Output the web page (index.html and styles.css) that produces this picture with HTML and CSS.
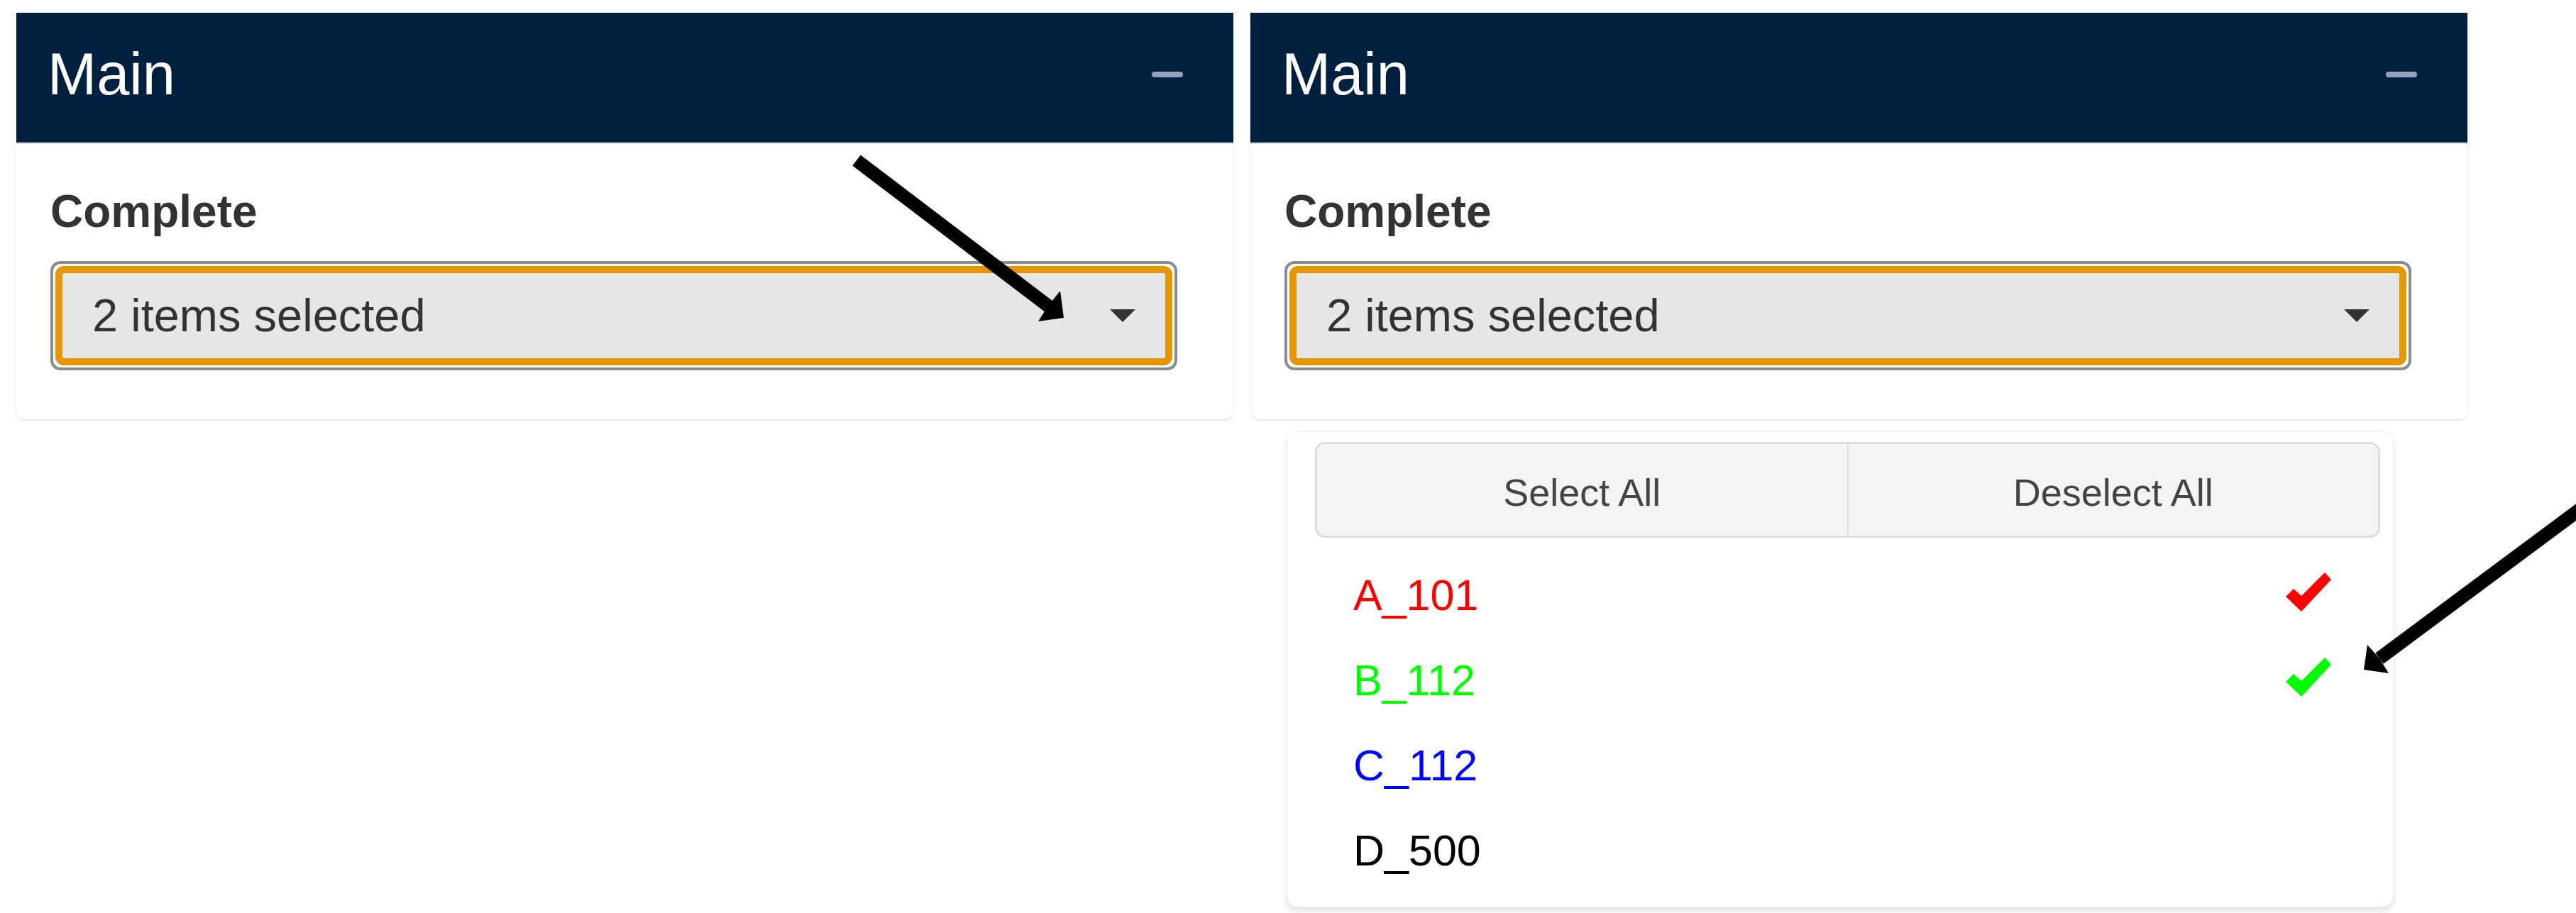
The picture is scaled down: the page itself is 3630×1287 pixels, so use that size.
FILE: index.html
```html
<!DOCTYPE html>
<html lang="en">
<head>
<meta charset="utf-8">
<title>Main</title>
<link rel="stylesheet" href="styles.css">
</head>
<body>
<div class="page">
  <section class="card">
    <header class="card-header">
      <h3 class="card-title">Main</h3>
      <span class="collapse-btn"></span>
    </header>
    <div class="card-body">
      <label class="field-label">Complete</label>
      <div class="picker">
        <div class="picker-btn">
          <div class="picker-inner">
            <span class="picker-text">2 items selected</span>
            <span class="caret"></span>
          </div>
        </div>
      </div>
    </div>
  </section>

  <section class="card">
    <header class="card-header">
      <h3 class="card-title">Main</h3>
      <span class="collapse-btn"></span>
    </header>
    <div class="card-body">
      <label class="field-label">Complete</label>
      <div class="picker">
        <div class="picker-btn">
          <div class="picker-inner">
            <span class="picker-text">2 items selected</span>
            <span class="caret"></span>
          </div>
        </div>
        <div class="menu">
          <div class="actions">
            <button class="action-btn">Select All</button>
            <button class="action-btn">Deselect All</button>
          </div>
          <ul class="options">
            <li class="option opt-red"><span>A_101</span>
              <svg class="check" viewBox="0 0 64 55"><polygon points="0,34 11,23 22,33 55,0 64,10 22,55" fill="#ff0000"/></svg>
            </li>
            <li class="option opt-green"><span>B_112</span>
              <svg class="check" viewBox="0 0 64 55"><polygon points="0,34 11,23 22,33 55,0 64,10 22,55" fill="#00ff00"/></svg>
            </li>
            <li class="option opt-blue"><span>C_112</span></li>
            <li class="option opt-black"><span>D_500</span></li>
          </ul>
        </div>
      </div>
    </div>
  </section>
</div>

<svg class="annotations" width="3630" height="1287" viewBox="0 0 3630 1287">
  <line x1="1207" y1="226" x2="1478" y2="432" stroke="#000" stroke-width="19"/>
  <polygon points="1499,448 1494,410 1477,431 1463,453" fill="#000"/>
  <line x1="3645" y1="711" x2="3353" y2="928" stroke="#000" stroke-width="19"/>
  <polygon points="3331,944 3336,909 3353,928 3366,949" fill="#000"/>
</svg>
</body>
</html>
```

FILE: styles.css
```css
* { box-sizing: border-box; }

html, body {
  margin: 0;
  padding: 0;
  width: 3630px;
  height: 1287px;
  overflow: hidden;
  background: #ffffff;
  font-family: "Liberation Sans", Arial, Helvetica, sans-serif;
  color: #333333;
}

body { position: relative; }

.page {
  display: flex;
  align-items: flex-start;
  gap: 24px;
  padding: 18px 0 0 23px;
}

.card {
  width: 1715px;
  background: #ffffff;
  border-radius: 0 0 12px 12px;
  box-shadow: 0 2px 2px rgba(0, 0, 0, 0.09), 0 0 0 1px rgba(0, 0, 0, 0.025);
}

.card-header {
  height: 184px;
  background: #00203f;
  border-bottom: 2px solid #6d7b90;
  display: flex;
  justify-content: space-between;
  align-items: flex-start;
  padding: 45px 71px 0 44px;
}

.card-title {
  margin: 0;
  font-size: 83px;
  line-height: 83px;
  font-weight: normal;
  color: #ffffff;
}

.collapse-btn {
  display: block;
  width: 44px;
  height: 8px;
  margin-top: 38px;
  border-radius: 4px;
  background: #98a1b9;
}

.card-body {
  padding: 64px 0 69px 48px;
}

.field-label {
  display: block;
  font-size: 64px;
  line-height: 64px;
  font-weight: bold;
  color: #333333;
  margin: 0 0 38px 0;
}

.picker {
  position: relative;
  width: 1588px;
}

.picker-btn {
  height: 154px;
  border: 4px solid #8c8c8c;
  border-radius: 14px;
  padding: 3px;
  background: #ffffff;
}

.picker-inner {
  height: 140px;
  border: 10px solid #e69700;
  border-radius: 12px;
  background: #e6e6e6;
  display: flex;
  align-items: center;
  justify-content: space-between;
  padding: 0 42px;
}

.picker-text {
  font-size: 65px;
  line-height: 120px;
  color: #333333;
}

.caret {
  width: 0;
  height: 0;
  border-left: 18px solid transparent;
  border-right: 18px solid transparent;
  border-top: 18px solid #333333;
}

.menu {
  position: absolute;
  top: 240px;
  left: 3px;
  width: 1560px;
  background: #ffffff;
  border: 1px solid rgba(0, 0, 0, 0.06);
  border-radius: 16px;
  box-shadow: 0 5px 8px rgba(0, 0, 0, 0.12);
  padding: 14px 18px 19px 39px;
}

.actions {
  display: flex;
  width: 1501px;
  height: 135px;
  border: 3px solid #dcdcdc;
  border-radius: 14px;
  overflow: hidden;
  background: #f4f4f4;
}

.action-btn {
  flex: 1 1 0;
  margin: 0;
  border: 0;
  background: #f4f4f4;
  font-family: "Liberation Sans", Arial, Helvetica, sans-serif;
  font-size: 54px;
  color: #444444;
  padding: 6px 0 0 0;
}

.action-btn + .action-btn {
  border-left: 2px solid #dcdcdc;
}

.options {
  list-style: none;
  margin: 21px 0 0 0;
  padding: 0;
  width: 1501px;
}

.option {
  height: 120px;
  display: flex;
  align-items: center;
  justify-content: space-between;
  padding: 0 69px 0 54px;
  font-size: 61px;
  line-height: 120px;
}

.opt-red { color: #ff0000; }
.opt-green { color: #00ff00; }
.opt-blue { color: #0000ff; }
.opt-black { color: #000000; }

.check {
  width: 64px;
  height: 55px;
  margin-top: -10px;
  display: block;
}

.annotations {
  position: absolute;
  top: 0;
  left: 0;
  pointer-events: none;
}
```
